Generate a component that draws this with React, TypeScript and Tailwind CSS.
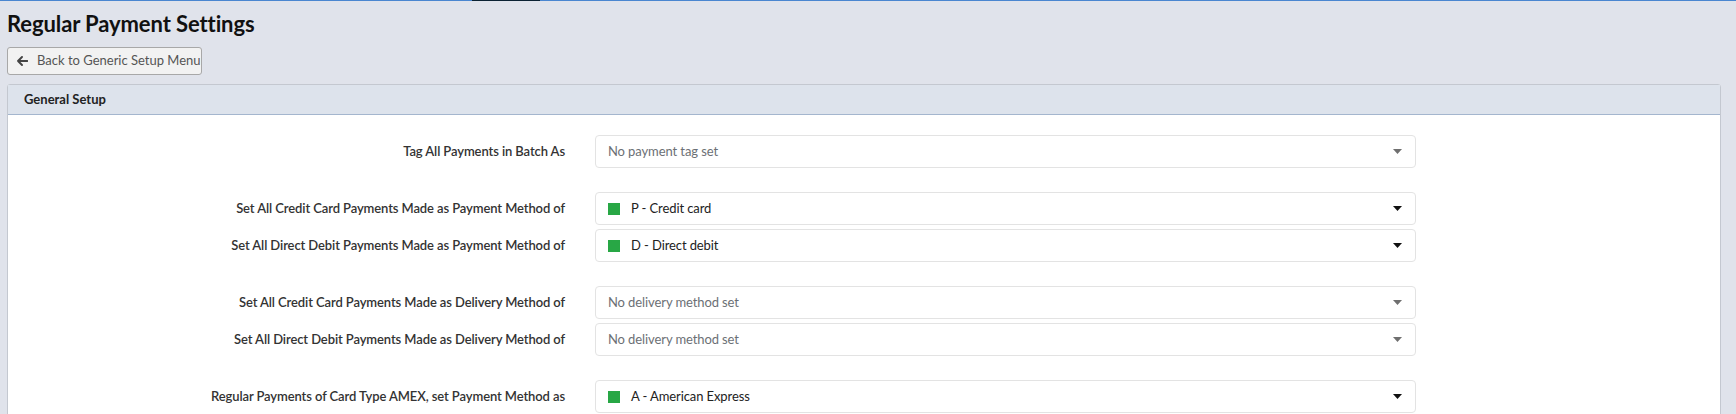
import React from "react";

type Row = { label: string; value: string; placeholder?: boolean; swatch?: boolean };

const groups: Row[][] = [
  [{ label: "Tag All Payments in Batch As", value: "No payment tag set", placeholder: true }],
  [
    { label: "Set All Credit Card Payments Made as Payment Method of", value: "P - Credit card", swatch: true },
    { label: "Set All Direct Debit Payments Made as Payment Method of", value: "D - Direct debit", swatch: true },
  ],
  [
    { label: "Set All Credit Card Payments Made as Delivery Method of", value: "No delivery method set", placeholder: true },
    { label: "Set All Direct Debit Payments Made as Delivery Method of", value: "No delivery method set", placeholder: true },
  ],
  [{ label: "Regular Payments of Card Type AMEX, set Payment Method as", value: "A - American Express", swatch: true }],
];

function Caret({ dark }: { dark: boolean }) {
  return (
    <svg width="9" height="5" viewBox="0 0 9 5" className="shrink-0">
      <path d="M0 0 L9 0 L4.5 5 Z" fill={dark ? "#111111" : "#6f6f6f"} />
    </svg>
  );
}

function FormRow({ row }: { row: Row }) {
  return (
    <div className="flex items-center h-[33px]">
      <div className="w-[557px] text-right text-[13px] font-semibold text-[#333333] tracking-[-0.1px]">{row.label}</div>
      <div className="ml-[30px] w-[821px] h-[33px] border border-[#e3e3e3] rounded-[4px] bg-white flex items-center pl-[12px] pr-[13px]">
        {row.swatch && <span className="w-[12px] h-[12px] bg-[#28a745] mr-[11px] shrink-0" />}
        <span className={"flex-1 text-[13px] tracking-[-0.1px] " + (row.placeholder ? "text-[#6c7075]" : "text-[#222222]")}>
          {row.value}
        </span>
        <Caret dark={!row.placeholder} />
      </div>
    </div>
  );
}

export default function App() {
  return (
    <div className="min-h-screen bg-[#e0e3eb]" style={{ fontFamily: "Lato, 'Noto Sans', sans-serif" }}>
      <div className="flex h-px">
        <div className="w-[472px] bg-[#4a86d0]" />
        <div className="w-[68px] bg-[#0b2233]" />
        <div className="flex-1 bg-[#4a86d0]" />
      </div>
      <div className="pl-[7px] pr-[15px]">
        <h1 className="text-[22px] font-bold text-[#111111] tracking-[-0.1px] leading-[30px] pt-[8px]">Regular Payment Settings</h1>
        <button className="mt-[8px] h-[28px] w-[195px] flex items-center gap-[9px] pl-[9px] border border-[#a8a8a8] rounded-[3px] bg-[#f2f2f2] text-[13px] text-[#555555]">
          <svg width="11" height="10" viewBox="0 0 11 10">
            <path d="M5 1 L1 5 L5 9 M1 5 L10.5 5" stroke="#444" strokeWidth="1.9" fill="none" strokeLinecap="round" strokeLinejoin="round" />
          </svg>
          <span>Back to Generic Setup Menu</span>
        </button>
        <div className="mt-[9px] border border-[#c4c8d0] rounded-t-[3px] bg-white">
          <div className="h-[30px] bg-[#dde3ec] border-b border-[#a4b6ce] flex items-center pl-[16px] text-[13px] font-bold text-[#222222]">
            General Setup
          </div>
          <div className="pt-[20px] pb-[20px] flex flex-col gap-[24px]">
            {groups.map((g, i) => (
              <div key={i} className="flex flex-col gap-[4px]">
                {g.map((r, j) => (
                  <FormRow key={j} row={r} />
                ))}
              </div>
            ))}
          </div>
        </div>
      </div>
    </div>
  );
}
